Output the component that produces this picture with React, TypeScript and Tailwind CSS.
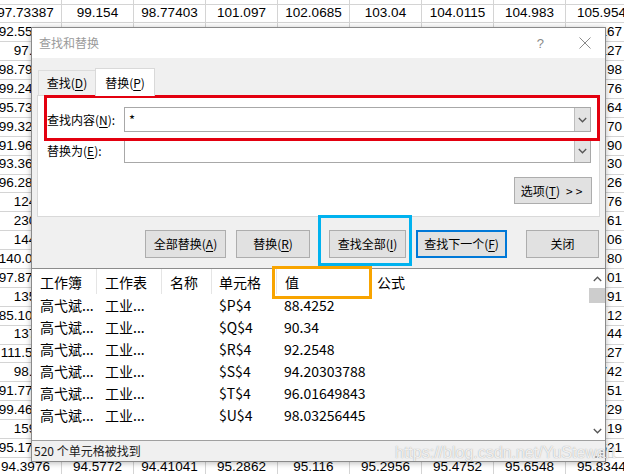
import React from "react";

const top0 = ["96.5912", "98.1274", "97.49016", "99.0873", "100.2134", "101.4261", "102.6388", "103.8515", "105.0642"];
const top1 = ["97.73387", "99.154", "98.77403", "101.097", "102.0685", "103.04", "104.0115", "104.983", "105.954"];
const bottom = ["94.3976", "94.5772", "94.41041", "95.2862", "95.116", "95.2956", "95.4752", "95.6548", "95.8344"];
const mid: [string, string][] = [
  ["92.55123", "167"],
  ["97.912", "127"],
  ["98.79412", "98"],
  ["99.24531", "76"],
  ["95.73218", "64"],
  ["99.32176", "70"],
  ["91.96347", "90"],
  ["93.36125", "30"],
  ["96.28743", "26"],
  ["124.35", "76"],
  ["230.17", "61"],
  ["144.26", "06"],
  ["140.0538", "80"],
  ["97.87265", "01"],
  ["135.42", "91"],
  ["85.10637", "12"],
  ["137.58", "44"],
  ["111.5274", "127"],
  ["98.364", "742"],
  ["91.77358", "51"],
  ["99.46182", "729"],
  ["159.73", "19"],
  ["95.17426", "621"],
];

const results = [
  ["$P$4", "88.4252"],
  ["$Q$4", "90.34"],
  ["$R$4", "92.2548"],
  ["$S$4", "94.20303788"],
  ["$T$4", "96.01649843"],
  ["$U$4", "98.03256445"],
];

function FullRow({ vals }: { vals: string[] }) {
  return (
    <div className="flex h-[18.9px] border-b border-[#d4d4d4]">
      {vals.map((v, i) => (
        <div key={i} className="w-[72px] shrink-0 border-r border-[#d4d4d4] flex items-center justify-center whitespace-nowrap">
          {v}
        </div>
      ))}
    </div>
  );
}

function MidRow({ left, right }: { left: string; right: string }) {
  return (
    <div className="flex h-[18.9px] border-b border-[#d4d4d4]">
      <div className="w-[72px] shrink-0 border-r border-[#d4d4d4] flex items-center justify-end pr-[6px] whitespace-nowrap">{left}</div>
      {[0, 1, 2, 3, 4, 5, 6].map((i) => (
        <div key={i} className="w-[72px] shrink-0 border-r border-[#d4d4d4]" />
      ))}
      <div className="w-[72px] shrink-0 border-r border-[#d4d4d4] flex items-center justify-end pr-[15px] whitespace-nowrap">{right}</div>
    </div>
  );
}

function U({ c }: { c: string }) {
  return <span className="underline underline-offset-[2px] decoration-[1px]">{c}</span>;
}

function Chevron({ up }: { up?: boolean }) {
  return (
    <svg width="9" height="6" viewBox="0 0 9 6" className="block">
      <path d={up ? "M0.8 5 L4.5 1.2 L8.2 5" : "M0.8 1 L4.5 4.8 L8.2 1"} fill="none" stroke="#555555" strokeWidth="1.3" />
    </svg>
  );
}

function ComboInput({ value }: { value?: string }) {
  return (
    <div className="w-[467px] h-[25px] border border-[#a8a8a8] bg-white flex">
      <div className="flex-1 flex items-center pl-[4px] text-[13px] text-black">{value}</div>
      <div className="w-[16px] h-full bg-[#e3e3e3] border-l border-[#bdbdbd] flex items-center justify-center">
        <Chevron />
      </div>
    </div>
  );
}

function Btn({ children, w, def }: { children: React.ReactNode; w: string; def?: boolean }) {
  return (
    <div
      className={
        "h-[28px] flex items-center justify-center bg-[#e1e1e1] text-[12px] text-black leading-none " +
        w +
        (def ? " border-2 border-[#0078d7]" : " border border-[#adadad]")
      }
    >
      {children}
    </div>
  );
}

export default function App() {
  return (
    <div className="relative w-[624px] h-[474px] overflow-hidden bg-white">
      {/* spreadsheet background */}
      <div className="absolute left-[-10px] top-[-14.4px] font-['Liberation_Sans',Arial,sans-serif] text-[13.5px] text-black">
        <FullRow vals={top0} />
        <FullRow vals={top1} />
        {mid.map(([l, r], i) => (
          <MidRow key={i} left={l} right={r} />
        ))}
        <FullRow vals={bottom} />
      </div>

      {/* dialog */}
      <div className="absolute left-[31px] top-[27px] w-[575px] h-[435px] border border-[#8a8a8a] bg-[#f0f0f0] shadow-[0_1px_6px_rgba(0,0,0,0.28)] flex flex-col font-['Noto_Sans_CJK_SC',sans-serif]">
        {/* title bar */}
        <div className="h-[30px] shrink-0 bg-white flex items-center pl-[7px] pr-[14px]">
          <span className="text-[12px] text-[#9a9a9a] leading-none">查找和替换</span>
          <span className="ml-auto text-[13px] text-[#8a8a8a] leading-none font-['Liberation_Sans',sans-serif]">?</span>
          <svg width="12" height="12" viewBox="0 0 12 12" className="ml-[35px]">
            <path d="M0.5 0.5 L11.5 11.5 M11.5 0.5 L0.5 11.5" stroke="#8a8a8a" strokeWidth="1" fill="none" />
          </svg>
        </div>

        {/* body */}
        <div className="h-[210px] shrink-0 flex flex-col px-[5px] pt-[9px]">
          <div className="flex items-end h-[28px] pl-[1px]">
            <div className="w-[57px] h-[25px] border-l border-t border-[#dcdcdc] flex items-center justify-center text-[12px] text-black leading-none">
              查找(<U c="D" />)
            </div>
            <div className="w-[60px] h-[28px] bg-white border border-b-0 border-[#d9d9d9] flex items-center justify-center text-[12px] text-black leading-none relative z-10 mb-[-1px]">
              替换(<U c="P" />)
            </div>
          </div>
          <div className="w-[563px] h-[122px] bg-white border border-[#d9d9d9] flex flex-col pl-[9px] pt-[11px]">
            <div className="flex items-center h-[25px]">
              <div className="w-[77px] text-[12px] text-black leading-none">
                查找内容(<U c="N" />):
              </div>
              <ComboInput value="*" />
            </div>
            <div className="flex items-center h-[25px] mt-[6px]">
              <div className="w-[77px] text-[12px] text-black leading-none">
                替换为(<U c="E" />):
              </div>
              <ComboInput />
            </div>
            <div className="self-end mr-[7px] mt-[14px] w-[78px] h-[27px] bg-[#e1e1e1] border border-[#adadad] flex items-center justify-center text-[12px] text-black leading-none">
              选项(<U c="T" />)<span className="ml-[6px] tracking-[3px]">&gt;&gt;</span>
            </div>
          </div>
          <div className="flex mt-[13px] ml-[108px]">
            <Btn w="w-[81px]">
              全部替换(<U c="A" />)
            </Btn>
            <div className="w-[10px]" />
            <Btn w="w-[74px]">
              替换(<U c="R" />)
            </Btn>
            <div className="w-[19px]" />
            <Btn w="w-[77px]">
              查找全部(<U c="I" />)
            </Btn>
            <div className="w-[10px]" />
            <Btn w="w-[91px]" def>
              查找下一个(<U c="F" />)
            </Btn>
            <div className="w-[19px]" />
            <Btn w="w-[73px]">关闭</Btn>
          </div>
        </div>

        {/* results list */}
        <div className="h-[172px] shrink-0 border-t border-[#8c8c8c] bg-white flex">
          <div className="flex-1 flex flex-col text-[14px] text-black">
            <div className="flex h-[25px] items-center">
              <div className="w-[65px] h-full pl-[8px] flex items-center border-r border-[#e5e5e5] leading-none">工作簿</div>
              <div className="w-[65px] h-full pl-[8px] flex items-center border-r border-[#e5e5e5] leading-none">工作表</div>
              <div className="w-[50px] h-full pl-[8px] flex items-center border-r border-[#e5e5e5] leading-none">名称</div>
              <div className="w-[65px] h-full pl-[7px] flex items-center border-r border-[#e5e5e5] leading-none">单元格</div>
              <div className="w-[95px] h-full pl-[8px] flex items-center border-r border-[#e5e5e5] leading-none">值</div>
              <div className="flex-1 h-full pl-[5px] flex items-center leading-none">公式</div>
            </div>
            {results.map(([cell, val], i) => (
              <div key={i} className="flex h-[22px] items-center">
                <div className="w-[65px] pl-[8px] leading-none whitespace-nowrap">高弋斌...</div>
                <div className="w-[65px] pl-[8px] leading-none whitespace-nowrap">工业...</div>
                <div className="w-[50px]" />
                <div className="w-[65px] pl-[7px] leading-none">{cell}</div>
                <div className="w-[95px] pl-[7px] leading-none whitespace-nowrap">{val}</div>
                <div className="flex-1" />
              </div>
            ))}
          </div>
          <div className="w-[16px] h-full flex flex-col bg-white">
            <div className="h-[19px] flex items-center justify-center">
              <Chevron up />
            </div>
            <div className="h-[15px] bg-[#cdcdcd]" />
            <div className="flex-1" />
            <div className="h-[19px] flex items-center justify-center">
              <Chevron />
            </div>
          </div>
        </div>

        {/* status bar */}
        <div className="h-[21px] shrink-0 border-t border-[#a0a0a0] bg-[#f0f0f0] flex items-center pl-[2px] relative">
          <span className="text-[12px] text-[#1a1a1a] leading-none">520 个单元格被找到</span>
          <svg width="8" height="8" viewBox="0 0 8 8" className="absolute right-[2px] bottom-[3px]">
            <rect x="6" y="0" width="2" height="2" fill="#a8a8a8" />
            <rect x="3" y="3" width="2" height="2" fill="#a8a8a8" />
            <rect x="6" y="3" width="2" height="2" fill="#a8a8a8" />
            <rect x="0" y="6" width="2" height="2" fill="#a8a8a8" />
            <rect x="3" y="6" width="2" height="2" fill="#a8a8a8" />
            <rect x="6" y="6" width="2" height="2" fill="#a8a8a8" />
          </svg>
        </div>
      </div>

      {/* annotation boxes */}
      <div className="absolute left-[44px] top-[95px] w-[556px] h-[46px] border-[3px] border-[#e3000f]" />
      <div className="absolute left-[318px] top-[215px] w-[94px] h-[51px] border-[3px] border-[#00b2ef]" />
      <div className="absolute left-[272px] top-[266px] w-[100px] h-[33px] border-[3px] border-[#f8a400]" />

      {/* watermark */}
      <div className="absolute left-[395px] top-[445px] text-[16px] leading-[16px] whitespace-nowrap font-['Liberation_Sans',Arial,sans-serif] text-[rgba(255,255,255,0.85)] [text-shadow:0_0_1px_rgba(110,110,110,0.7)]">
        https://blog.csdn.net/YuStewart
      </div>
    </div>
  );
}
